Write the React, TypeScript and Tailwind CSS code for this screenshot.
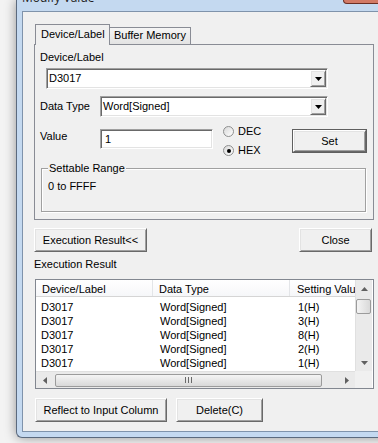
import type { ReactNode } from 'react'

const RAISED =
  'bg-[#f0f0f0] border border-t-white border-l-white border-b-[#696969] border-r-[#696969] shadow-[inset_1px_1px_0_#e3e3e3,inset_-1px_-1px_0_#a0a0a0]'
const SUNKEN =
  'bg-white border border-t-[#a0a0a0] border-l-[#a0a0a0] border-b-white border-r-white shadow-[inset_1px_1px_0_#696969,inset_-1px_-1px_0_#e3e3e3]'

const ROWS = [
  { device: 'D3017', type: 'Word[Signed]', value: '1(H)' },
  { device: 'D3017', type: 'Word[Signed]', value: '3(H)' },
  { device: 'D3017', type: 'Word[Signed]', value: '8(H)' },
  { device: 'D3017', type: 'Word[Signed]', value: '2(H)' },
  { device: 'D3017', type: 'Word[Signed]', value: '1(H)' },
]

function Arrow({ dir, color = '#000' }: { dir: 'up' | 'down' | 'left' | 'right'; color?: string }) {
  if (dir === 'left' || dir === 'right') {
    return (
      <svg width="4" height="7" viewBox="0 0 4 7">
        <polygon points={dir === 'left' ? '4,0 4,7 0,3.5' : '0,0 0,7 4,3.5'} fill={color} />
      </svg>
    )
  }
  return (
    <svg width="7" height="4" viewBox="0 0 7 4">
      <polygon points={dir === 'down' ? '0,0 7,0 3.5,4' : '0,4 7,4 3.5,0'} fill={color} />
    </svg>
  )
}

function Combo({ value, className }: { value: string; className: string }) {
  return (
    <div className={`${SUNKEN} ${className} h-[21px] flex items-center pl-[2px] pr-[1px]`}>
      <span className="flex-1 leading-[13px]">{value}</span>
      <span className={`${RAISED} w-[16px] h-[17px] flex items-center justify-center`}>
        <Arrow dir="down" />
      </span>
    </div>
  )
}

function Btn({ children, className }: { children: ReactNode; className: string }) {
  return (
    <button className={`${RAISED} ${className} flex items-center justify-center leading-[13px]`}>
      {children}
    </button>
  )
}

function Radio({ label, checked }: { label: string; checked?: boolean }) {
  return (
    <div className="flex items-center gap-[4px] h-[11px]">
      <span className="w-[11px] h-[11px] rounded-full border border-[#8e8f8f] bg-gradient-to-br from-[#d8d8d8] to-white flex items-center justify-center">
        {checked && <span className="w-[4px] h-[4px] rounded-full bg-black" />}
      </span>
      <span className="leading-[13px]">{label}</span>
    </div>
  )
}

function VScroll() {
  return (
    <div className="w-[17px] h-[91px] bg-[#eaeaea] border-l border-[#e0e0e0] flex flex-col">
      <div className="h-[17px] flex items-center justify-center">
        <Arrow dir="up" color="#606060" />
      </div>
      <div className="mt-[2px] ml-[0px] w-[15px] h-[15px] rounded-[2px] border border-[#9b9b9b] bg-gradient-to-r from-[#f4f4f4] to-[#d9d9d9]" />
      <div className="flex-1" />
      <div className="h-[17px] flex items-center justify-center">
        <Arrow dir="down" color="#606060" />
      </div>
    </div>
  )
}

function HScroll() {
  return (
    <div className="w-[319px] h-[17px] bg-[#eaeaea] border-t border-[#e0e0e0] flex items-center">
      <div className="w-[17px] flex items-center justify-center">
        <Arrow dir="left" color="#606060" />
      </div>
      <div className="ml-[2px] w-[267px] h-[13px] rounded-[2px] border border-[#9b9b9b] bg-gradient-to-b from-[#f4f4f4] to-[#d9d9d9] flex items-center justify-center">
        <svg width="7" height="6" viewBox="0 0 7 6">
          <rect x="0" y="0" width="1" height="6" fill="#6a6a6a" />
          <rect x="3" y="0" width="1" height="6" fill="#6a6a6a" />
          <rect x="6" y="0" width="1" height="6" fill="#6a6a6a" />
        </svg>
      </div>
      <div className="flex-1" />
      <div className="w-[17px] flex items-center justify-center">
        <Arrow dir="right" color="#606060" />
      </div>
    </div>
  )
}

export default function App() {
  return (
    <div className="w-[378px] h-[443px] overflow-hidden bg-[#f3f3f3] pl-[16px] font-['Liberation_Sans',Arial,sans-serif] text-[11px] text-black">
      <div className="w-[380px] h-[438px] bg-[#c4d9f0] border-l border-b border-[#5b6a7e] rounded-bl-[6px] pl-[5px] pb-[5px] flex flex-col shadow-[0_0_12px_rgba(0,0,0,0.4)]">
        {/* title bar, mostly cut off */}
        <div className="relative h-[11px] overflow-hidden">
          <div className="mt-[-8px] text-[12px] leading-[12px] text-[#1e1e1e] font-['Open_Sans',sans-serif]">
            Modify Value
          </div>
          <div className="absolute top-0 left-[321px] w-[60px] h-[4px] bg-[#d27a66] border border-t-0 border-[#6b2f24] rounded-bl-[4px]" />
        </div>

        <div className="flex-1 bg-[#f0f0f0] border-l border-t border-b border-[#7f93ab] pl-[11px] flex flex-col">
          {/* tabs */}
          <div className="mt-[12px] ml-[1px] h-[20px] flex items-end">
            <div className="relative z-10 mb-[-1px] w-[75px] h-[21px] border border-b-0 border-[#898c95] bg-[#f0f0f0] pl-[5px] pt-[3px] leading-[13px]">
              Device/Label
            </div>
            <div className="w-[81px] h-[17px] border border-l-0 border-b-0 border-[#898c95] bg-gradient-to-b from-[#f5f5f5] to-[#e3e3e3] pl-[4px] pt-[1px] leading-[13px]">
              Buffer Memory
            </div>
          </div>

          {/* tab panel */}
          <div className="w-[340px] h-[176px] border border-[#898c95] bg-[#f0f0f0] flex flex-col">
            <div className="mt-[6px] ml-[5px] leading-[13px]">Device/Label</div>
            <Combo value="D3017" className="mt-[4px] ml-[11px] w-[282px]" />

            <div className="mt-[7px] h-[21px] flex items-center">
              <span className="w-[65px] pl-[5px] leading-[13px]">Data Type</span>
              <Combo value="Word[Signed]" className="w-[228px]" />
            </div>

            <div className="mt-[9px] h-[30px] flex items-start">
              <span className="w-[65px] pl-[5px] mt-[4px] leading-[13px]">Value</span>
              <div className={`${SUNKEN} mt-[3px] w-[113px] h-[20px] flex items-center pl-[4px] leading-[13px]`}>1</div>
              <div className="ml-[10px] w-[69px] flex flex-col gap-[8px]">
                <Radio label="DEC" />
                <Radio label="HEX" checked />
              </div>
              <button className="mt-[3px] w-[75px] h-[24px] border border-[#5f5f5f] p-0 flex">
                <span className={`${RAISED} flex-1 flex items-center justify-center leading-[13px]`}>Set</span>
              </button>
            </div>

            <div className="relative mt-[12px] ml-[6px] w-[325px] h-[44px] border border-[#a0a0a0] shadow-[inset_1px_1px_0_#fff,1px_1px_0_#fff]">
              <span className="absolute top-[-7px] left-[6px] px-[1px] bg-[#f0f0f0] leading-[13px]">Settable Range</span>
              <div className="mt-[11px] pl-[6px] leading-[13px]">0 to FFFF</div>
            </div>
          </div>

          <div className="mt-[8px] w-[338px] flex justify-between">
            <Btn className="w-[113px] h-[24px]">Execution Result&lt;&lt;</Btn>
            <Btn className="w-[73px] h-[24px]">Close</Btn>
          </div>

          <div className="mt-[6px] leading-[13px]">Execution Result</div>

          {/* list view */}
          <div className="mt-[8px] ml-[1px] w-[339px] h-[110px] border border-[#828790] bg-white flex flex-col">
            <div className="flex h-[91px]">
              <div className="w-[319px] overflow-hidden flex flex-col">
                <div className="h-[17px] flex border-b border-[#d5d5d5] bg-gradient-to-b from-white to-[#f6f7f9] whitespace-nowrap">
                  <div className="w-[117px] shrink-0 border-r border-[#e3e5e8] pl-[6px] pt-[3px] leading-[13px]">Device/Label</div>
                  <div className="w-[137px] shrink-0 border-r border-[#e3e5e8] pl-[6px] pt-[3px] leading-[13px]">Data Type</div>
                  <div className="w-[80px] shrink-0 pl-[7px] pt-[3px] leading-[13px]">Setting Value</div>
                </div>
                <div className="pt-[3px] flex flex-col">
                  {ROWS.map((r, i) => (
                    <div key={i} className="h-[14px] flex leading-[14px] whitespace-nowrap">
                      <div className="w-[117px] shrink-0 pl-[5px]">{r.device}</div>
                      <div className="w-[137px] shrink-0 pl-[7px]">{r.type}</div>
                      <div className="pl-[8px]">{r.value}</div>
                    </div>
                  ))}
                </div>
              </div>
              <VScroll />
            </div>
            <div className="flex h-[17px]">
              <HScroll />
              <div className="w-[17px] bg-[#f0f0f0]" />
            </div>
          </div>

          <div className="mt-[9px] ml-[1px] flex gap-[9px]">
            <Btn className="w-[132px] h-[24px]">Reflect to Input Column</Btn>
            <Btn className="w-[87px] h-[24px]">Delete(C)</Btn>
          </div>
        </div>
      </div>
    </div>
  )
}
